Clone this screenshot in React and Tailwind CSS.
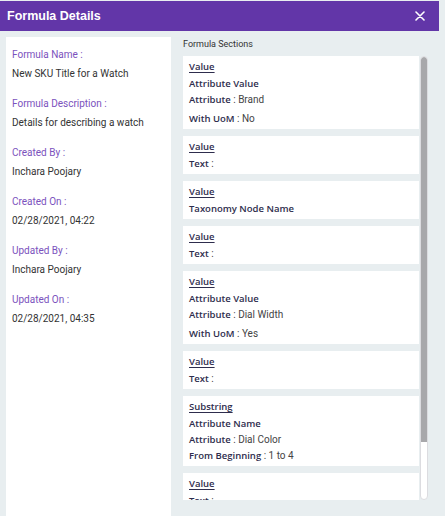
const details = [
  { label: 'Formula Name :', value: 'New SKU Title for a Watch' },
  { label: 'Formula Description :', value: 'Details for describing a watch' },
  { label: 'Created By :', value: 'Inchara Poojary' },
  { label: 'Created On :', value: '02/28/2021, 04:22' },
  { label: 'Updated By :', value: 'Inchara Poojary' },
  { label: 'Updated On :', value: '02/28/2021, 04:35' },
]

const sections = [
  { title: 'Value', lines: [['Attribute Value'], ['Attribute', 'Brand'], ['With UoM', 'No']] },
  { title: 'Value', lines: [['Text', '']] },
  { title: 'Value', lines: [['Taxonomy Node Name']] },
  { title: 'Value', lines: [['Text', '']] },
  { title: 'Value', lines: [['Attribute Value'], ['Attribute', 'Dial Width'], ['With UoM', 'Yes']] },
  { title: 'Value', lines: [['Text', '']] },
  { title: 'Substring', lines: [['Attribute Name'], ['Attribute', 'Dial Color'], ['From Beginning', '1 to 4']] },
  { title: 'Value', lines: [['Text', '']] },
]

const bold = { fontFamily: '"Open Sans", "Liberation Sans", sans-serif' }

function SectionCard({ title, lines }) {
  return (
    <div className="bg-white px-[6px] pt-[1px] pb-[2px] shrink-0">
      <div className="text-[9.5px] leading-[19px] font-semibold text-[#2e2d4d] underline underline-offset-2" style={bold}>
        {title}
      </div>
      {lines.map((l, i) => (
        <div
          key={i}
          className={`text-[9.5px] leading-[16px] text-[#2e2d4d] ${l[0] === 'With UoM' ? 'mt-[3px]' : ''}`}
        >
          <span className="font-semibold" style={bold}>{l[0]}</span>
          {l.length > 1 && <span className="text-[10px] text-[#444]"> : {l[1]}</span>}
        </div>
      ))}
    </div>
  )
}

export default function App() {
  return (
    <div className="w-[445px] h-[516px] bg-[#e8eef0] overflow-hidden" style={{ fontFamily: 'Roboto, "Liberation Sans", sans-serif' }}>
      {/* Header */}
      <div className="mt-px w-[439px] h-[30px] bg-[#6236a8] flex items-center justify-between pl-[7px] pr-[14px]">
        <span className="text-white text-[12.5px] font-bold" style={{ fontFamily: '"Liberation Sans", Arial, sans-serif' }}>
          Formula Details
        </span>
        <svg width="10" height="10" viewBox="0 0 10 10" aria-hidden="true">
          <path d="M1 1L9 9M9 1L1 9" stroke="white" strokeWidth="1.6" strokeLinecap="round" />
        </svg>
      </div>

      <div className="flex pt-[6px] pl-[6px] gap-[12px]">
        {/* Left details panel */}
        <div className="w-[165px] h-[480px] bg-white pl-[6px] pt-[12px] shrink-0">
          {details.map((d) => (
            <div key={d.label} className="h-[49px]">
              <div className="text-[10px] leading-[12px] text-[#7b52bd]">{d.label}</div>
              <div className="text-[10px] leading-[12px] text-[#333] mt-[7px]">{d.value}</div>
            </div>
          ))}
        </div>

        {/* Right sections */}
        <div className="flex flex-col w-[245px]">
          <div className="text-[9px] leading-[12px] text-[#333] pt-[1px]">Formula Sections</div>
          <div className="flex mt-[6px] h-[444px]">
            <div className="flex-1 flex flex-col gap-[7px] overflow-hidden">
              {sections.map((s, i) => (
                <SectionCard key={i} {...s} />
              ))}
            </div>
            {/* scrollbar */}
            <div className="w-[8px] ml-px flex flex-col rounded-full bg-white border border-[#dcdce0] overflow-hidden">
              <div className="h-[385px] bg-[#a8a8ab] rounded-t-full" />
              <div className="flex-1" />
            </div>
          </div>
        </div>
      </div>
    </div>
  )
}
